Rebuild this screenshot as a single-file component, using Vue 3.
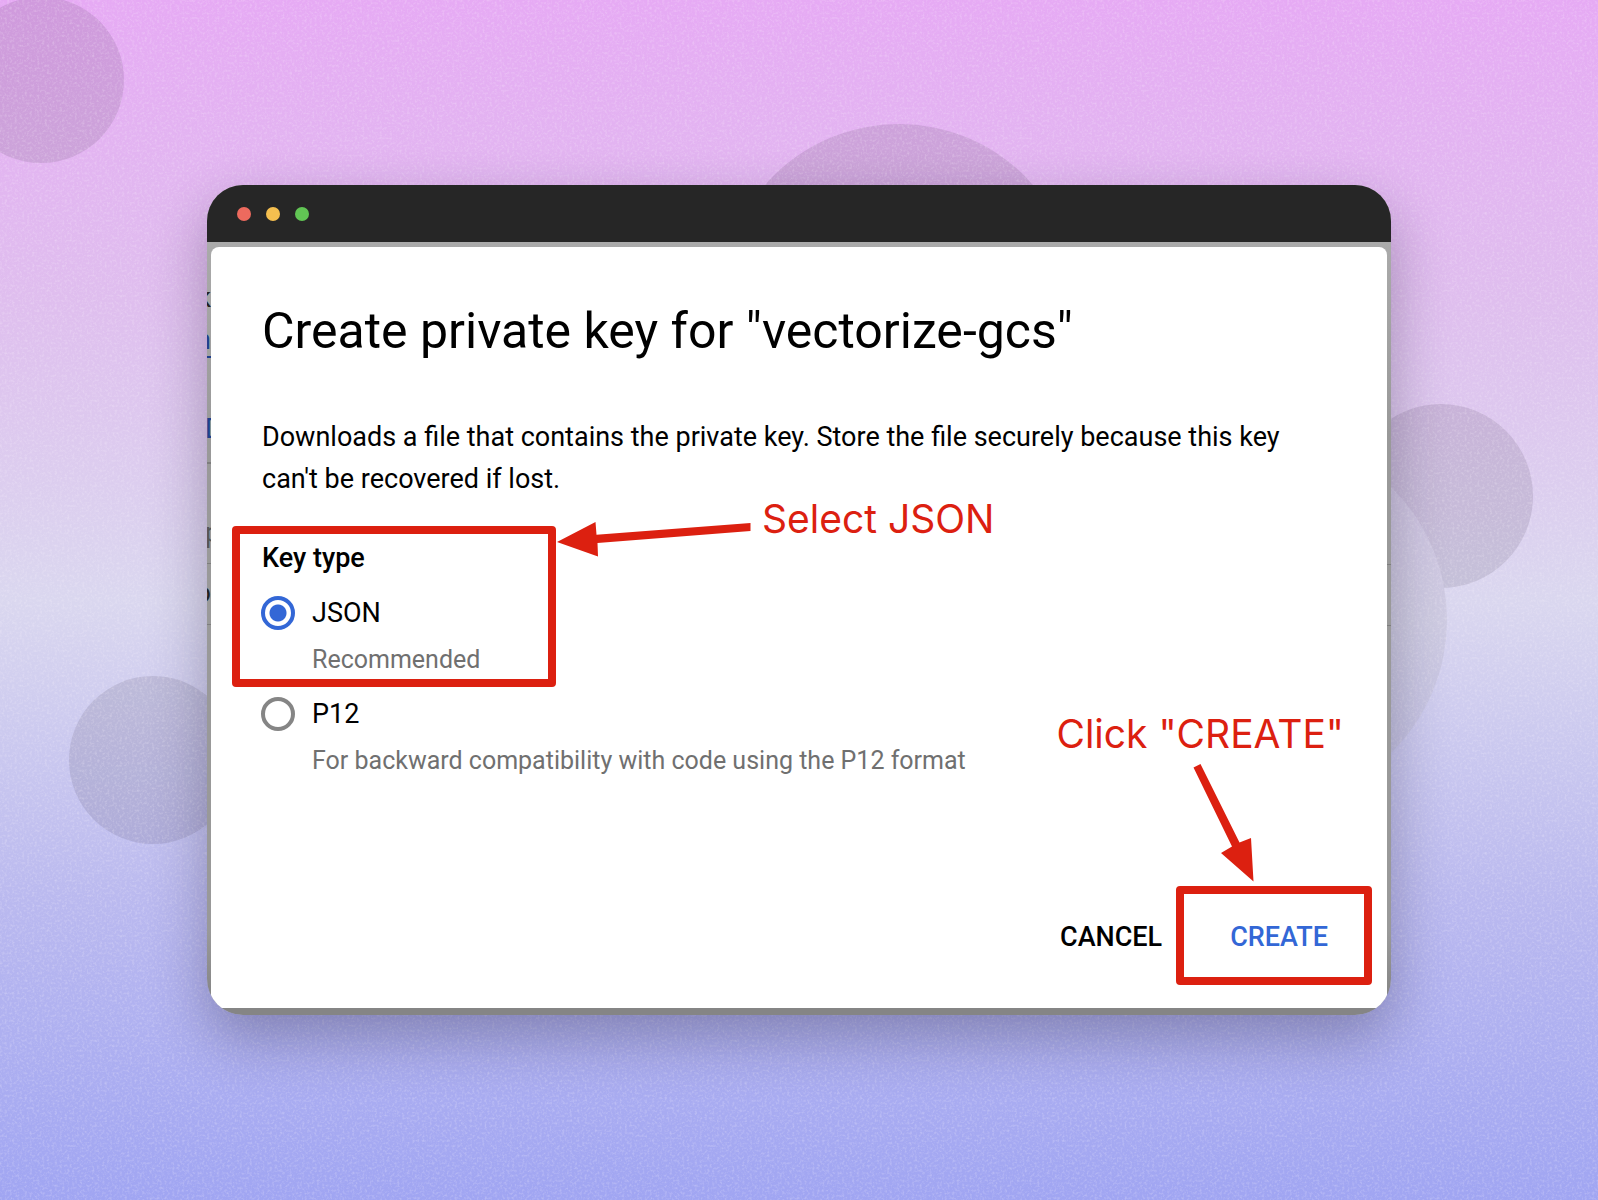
<script setup>
import { ref } from 'vue'

const keyType = ref('json')
</script>

<template>
  <main class="page">
    <svg class="backdrop" viewBox="0 0 1598 1200" preserveAspectRatio="xMidYMid slice" aria-hidden="true">
      <defs>
        <linearGradient id="sky" x1="0" y1="0" x2="0" y2="1">
          <stop offset="0" stop-color="#e6aaf4" />
          <stop offset="0.25" stop-color="#dfbeee" />
          <stop offset="0.5" stop-color="#dad7ef" />
          <stop offset="0.75" stop-color="#bab9ef" />
          <stop offset="1" stop-color="#a0a5f2" />
        </linearGradient>
        <linearGradient id="orb" x1="0" y1="0" x2="0" y2="1">
          <stop offset="0" stop-color="#d0c2e2" />
          <stop offset="0.5" stop-color="#cecbe2" />
          <stop offset="1" stop-color="#c0bee4" />
        </linearGradient>
        <filter id="grain" x="0" y="0" width="100%" height="100%">
          <feTurbulence type="fractalNoise" baseFrequency="0.4" numOctaves="2" seed="4" />
          <feColorMatrix values="0 0 0 0 1  0 0 0 0 0.95  0 0 0 0 1  1.6 0 0 0 -0.72" />
        </filter>
      </defs>
      <rect width="1598" height="1200" fill="url(#sky)" />
      <g fill="#32283c" fill-opacity="0.12">
        <circle cx="41" cy="80" r="83" />
        <circle cx="899" cy="302" r="178" />
        <circle cx="1441" cy="496" r="92" />
        <circle cx="153" cy="760" r="84" />
      </g>
      <circle cx="1261" cy="620" r="186" fill="url(#orb)" />
      <rect width="1598" height="1200" filter="url(#grain)" opacity="0.35" />
    </svg>

    <section class="window">
      <header class="titlebar">
        <span class="dot red"></span>
        <span class="dot yellow"></span>
        <span class="dot green"></span>
      </header>

      <div class="body">
        <div class="strip" aria-hidden="true">
          <span class="under-text first">k</span>
          <span class="under-text link">n</span>
          <span class="under-text heading">D</span>
          <span class="under-text cell-a">p</span>
          <span class="under-text cell-b">o</span>
        </div>

        <form class="dialog" @submit.prevent>
          <h1>Create private key for "vectorize-gcs"</h1>
          <p class="intro">
            Downloads a file that contains the private key. Store the file securely because this key can't be
            recovered if lost.
          </p>

          <div class="group" role="radiogroup" aria-labelledby="key-type">
            <h2 id="key-type">Key type</h2>
            <label class="option" for="type-json">
              <input id="type-json" v-model="keyType" type="radio" name="type" value="json" />
              <span>JSON</span>
            </label>
            <p class="hint">Recommended</p>
            <label class="option" for="type-p12">
              <input id="type-p12" v-model="keyType" type="radio" name="type" value="p12" />
              <span>P12</span>
            </label>
            <p class="hint">For backward compatibility with code using the P12 format</p>

            <span class="frame frame-type"></span>
            <svg class="arrow arrow-type" viewBox="0 0 194 35" aria-hidden="true">
              <path d="M0 20 38.500 0 39.500 12.800 193.500 1V9L40.500 21 41 34.500Z" />
            </svg>
            <span class="note note-type">Select JSON</span>
          </div>

          <div class="actions">
            <button type="button">CANCEL</button>
            <div class="confirm">
              <button class="primary" type="submit">CREATE</button>
              <span class="frame frame-create"></span>
              <svg class="arrow arrow-create" viewBox="0 0 70 122" aria-hidden="true">
                <path d="M3.500 5.500 10.500 2 49.500 80.500 61 76 63.500 119.500 31 91 42 84.500Z" />
              </svg>
              <span class="note note-create">Click "CREATE"</span>
            </div>
          </div>
        </form>

        <div class="strip" aria-hidden="true">
          <span class="rule-a"></span>
          <span class="rule-b"></span>
        </div>
      </div>
    </section>
  </main>
</template>

<style>
body {
  margin: 0;
}
</style>

<style scoped>
.page {
  position: relative;
  box-sizing: border-box;
  display: flex;
  align-items: center;
  min-height: 100vh;
  padding: 40px 207px;
  overflow: hidden;
  font-family: Roboto, "Liberation Sans", sans-serif;
  color: #000;
}

.backdrop {
  position: absolute;
  inset: 0;
  width: 100%;
  height: 100%;
}

.window {
  position: relative;
  flex: 1;
  overflow: hidden;
  border-radius: 36px;
  background: linear-gradient(#aaa 7%, #999 30%, #999 90%, #858585 98%);
  box-shadow: 0 24px 56px rgba(20, 15, 40, 0.3);
}

.titlebar {
  display: flex;
  align-items: center;
  gap: 15px;
  height: 57px;
  padding: 0 30px;
  background: #262626;
}

.dot {
  width: 14px;
  height: 14px;
  border-radius: 50%;
}

.red {
  background: #ed6a5e;
}

.yellow {
  background: #f5bf4f;
}

.green {
  background: #61c554;
}

.body {
  display: grid;
  grid-template-columns: 4px 1fr 4px;
  padding: 5px 0 7px;
}

.strip {
  display: flex;
  flex-direction: column;
  padding-top: 30px;
  overflow: hidden;
}

.under-text {
  display: flex;
  justify-content: flex-end;
  font-size: 27px;
  line-height: 42px;
  color: #222;
}

.first {
  height: 42px;
}

.link {
  height: 37px;
  margin-bottom: 50px;
  border-bottom: 2px solid #1f3f8c;
  color: #1f3f8c;
}

.heading {
  justify-content: flex-start;
  height: 54px;
  border-bottom: 2px solid #7d7d7d;
  color: #1f3f8c;
  text-indent: -2px;
}

.cell-a {
  justify-content: flex-start;
  height: 51px;
  padding-top: 48px;
  border-bottom: 1px solid #7d7d7d;
  color: #555;
  text-indent: -2px;
}

.cell-b {
  height: 52px;
  padding-top: 8px;
  border-bottom: 1px solid #7d7d7d;
}

.rule-a {
  height: 287px;
  border-bottom: 1px solid #7d7d7d;
}

.rule-b {
  height: 60px;
  border-bottom: 1px solid #7d7d7d;
}

.dialog {
  padding: 54px 59px 50px 51px;
  border-radius: 8px;
  background: #fff;
}

h1,
h2,
p {
  margin: 0;
}

h1 {
  font-size: 50px;
  font-weight: 400;
  line-height: 60px;
}

.intro {
  margin-top: 55px;
  font-size: 27px;
  line-height: 42px;
}

.group {
  position: relative;
  margin-top: 37px;
}

h2 {
  margin-bottom: 13px;
  font-size: 27px;
  font-weight: 500;
  line-height: 42px;
}

.option {
  display: flex;
  align-items: center;
  gap: 17px;
  margin-left: -1px;
  font-size: 27px;
  line-height: 42px;
}

.option input {
  appearance: none;
  box-sizing: border-box;
  width: 34px;
  height: 34px;
  margin: 0;
  border: 4px solid #858585;
  border-radius: 50%;
}

.option input:checked {
  border-color: #3367d6;
  background: radial-gradient(circle, #3367d6 8px, transparent 9px);
}

.hint {
  margin: 10px 0 17px 50px;
  font-size: 25px;
  line-height: 32px;
  color: #707070;
}

.actions {
  display: flex;
  justify-content: flex-end;
  gap: 68px;
  margin-top: 139px;
}

.confirm {
  position: relative;
}

button {
  padding: 0;
  border: 0;
  background: none;
  font: 500 27px/42px Roboto, "Liberation Sans", sans-serif;
  color: #000;
  cursor: pointer;
}

.primary {
  color: #3367d6;
}

.frame {
  position: absolute;
  box-sizing: border-box;
  border: 8px solid #dc2010;
  border-radius: 4px;
  pointer-events: none;
}

.frame-type {
  top: -11px;
  left: -30px;
  width: 324px;
  height: 161px;
}

.frame-create {
  inset: -30px -44px -27px -54px;
}

.arrow {
  position: absolute;
  fill: #dc2010;
  pointer-events: none;
}

.arrow-type {
  top: -15px;
  left: 295px;
  width: 194px;
  height: 35px;
}

.arrow-create {
  top: -154px;
  right: 68px;
  width: 70px;
  height: 122px;
}

.note {
  position: absolute;
  font-family: Inter, Roboto, sans-serif;
  font-size: 39px;
  line-height: 48px;
  white-space: nowrap;
  color: #dc2010;
}

.note-type {
  top: -42px;
  left: 500px;
}

.note-create {
  top: -206px;
  right: -16px;
}
</style>
